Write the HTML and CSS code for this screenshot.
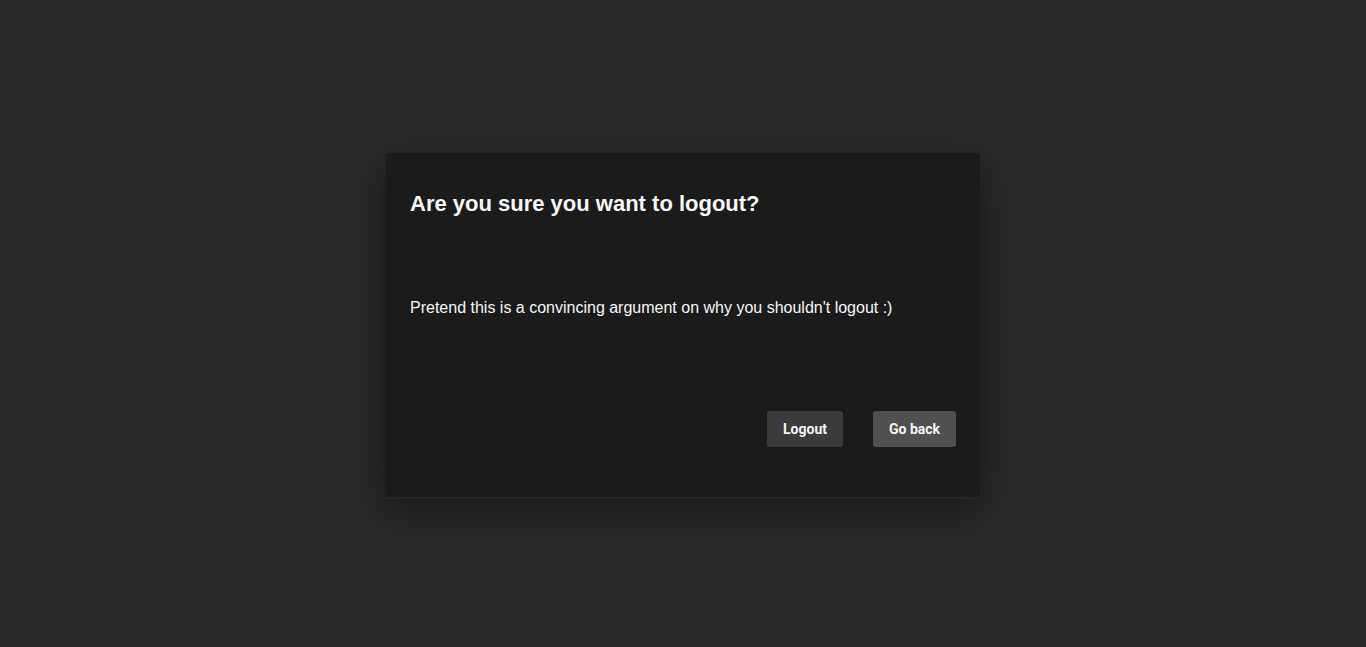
FILE: index.html
```html
<!DOCTYPE html>
<html>
<head>
<meta charset="utf-8">
<link rel="stylesheet" href="styles.css">
</head>
<body>
<div class="page">
  <div class="dialog">
    <h2 class="title">Are you sure you want to logout?</h2>
    <p class="message">Pretend this is a convincing argument on why you shouldn't logout :)</p>
    <div class="actions">
      <button class="btn btn-logout">Logout</button>
      <button class="btn btn-back">Go back</button>
    </div>
  </div>
</div>
</body>
</html>
```
FILE: styles.css
```css
html, body {
  margin: 0;
  padding: 0;
  background: #292929;
  height: 100%;
}
.page {
  height: 647px;
  display: flex;
  justify-content: center;
  align-items: flex-start;
  padding-top: 153px;
  box-sizing: border-box;
}
.dialog {
  width: 594px;
  height: 346px;
  box-sizing: border-box;
  background: #1b1b1b;
  border-radius: 4px;
  border-bottom: 2px solid #272727;
  box-shadow: 0 12px 40px rgba(0, 0, 0, 0.4);
  padding: 26px 24px 50px;
  display: flex;
  flex-direction: column;
  font-family: "Liberation Sans", Arial, sans-serif;
  color: #f7f7f7;
}
.title {
  margin: 0;
  font-size: 22px;
  font-weight: bold;
  line-height: 50px;
}
.message {
  margin: 69px 0 0;
  font-size: 16px;
  line-height: 20px;
}
.actions {
  margin-top: auto;
  display: flex;
  justify-content: flex-end;
  gap: 30px;
}
.btn {
  height: 36px;
  border: none;
  border-radius: 3px;
  color: #f5f5f5;
  font-family: Roboto, "Liberation Sans", sans-serif;
  font-weight: bold;
  font-size: 14px;
  padding: 0;
  white-space: nowrap;
  cursor: pointer;
}
.btn-logout {
  background: #3b3b3b;
  width: 76px;
}
.btn-back {
  background: #505050;
  width: 83px;
}
```
